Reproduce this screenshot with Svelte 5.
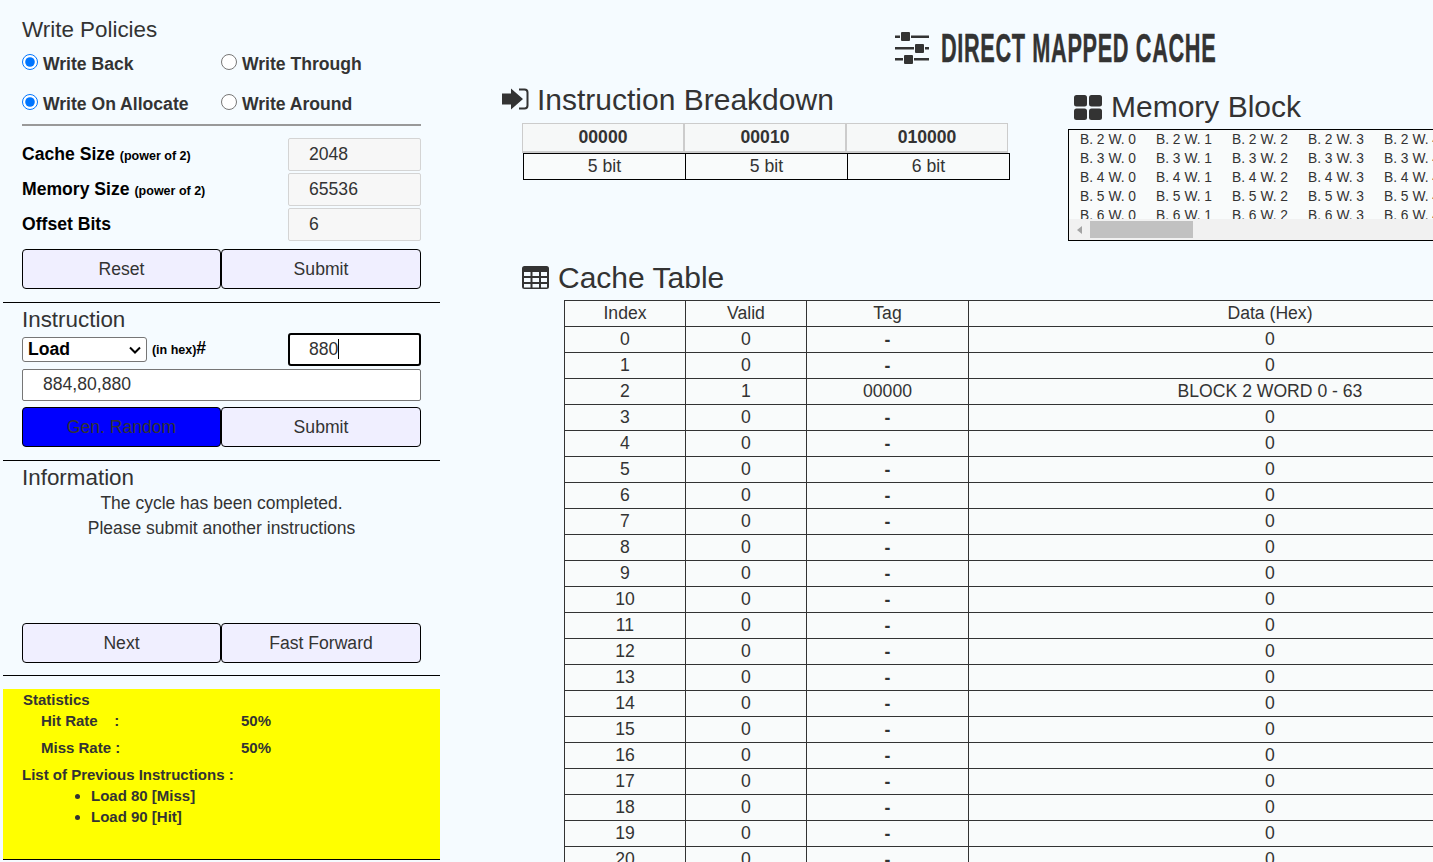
<script>
  const rows = Array.from({ length: 21 }, (_, i) => i);
  const blocks = [2, 3, 4, 5, 6];
  const words = [0, 1, 2, 3, 4, 5];
</script>

<div class="page">
  <aside class="side">
    <section class="sec first">
      <h3>Write Policies</h3>
      <div class="radios">
        <label><input type="radio" name="w" checked /> Write Back</label>
        <label><input type="radio" name="w" /> Write Through</label>
        <label><input type="radio" name="a" checked /> Write On Allocate</label>
        <label><input type="radio" name="a" /> Write Around</label>
      </div>
      <div class="hr"></div>
      <div class="field"><span class="lab">Cache Size <small>(power of 2)</small></span><input class="ro" readonly value="2048" /></div>
      <div class="field"><span class="lab">Memory Size <small>(power of 2)</small></span><input class="ro" readonly value="65536" /></div>
      <div class="field"><span class="lab">Offset Bits</span><input class="ro" readonly value="6" /></div>
      <div class="btns"><button>Reset</button><button>Submit</button></div>
    </section>
    <section class="sec instr">
      <h3>Instruction</h3>
      <div class="field instr-row">
        <span class="lab"><span class="selwrap"><select><option>Load</option></select><svg class="chev" width="12" height="8" viewBox="0 0 12 8"><path d="M1 1.500l5 5 5-5" fill="none" stroke="#000" stroke-width="2" /></svg></span> <small class="hex">(in hex)</small>#</span>
        <div class="focus">880<i class="caret"></i></div>
      </div>
      <input class="addr" value="884,80,880" />
      <div class="btns"><button class="blue">Gen. Random</button><button>Submit</button></div>
    </section>
    <section class="sec info">
      <h3>Information</h3>
      <p>The cycle has been completed.</p>
      <p>Please submit another instructions</p>
      <div class="btns low"><button>Next</button><button>Fast Forward</button></div>
    </section>
    <section class="stats">
      <div class="st">Statistics</div>
      <div class="rate one"><span>Hit Rate &nbsp;&nbsp; :</span><span>50%</span></div>
      <div class="rate two"><span>Miss Rate :</span><span>50%</span></div>
      <div class="prev">List of Previous Instructions :</div>
      <ul>
        <li>Load 80 [Miss]</li>
        <li>Load 90 [Hit]</li>
      </ul>
    </section>
  </aside>

  <main class="main">
    <header class="title">
      <svg class="sliders" width="34" height="32" viewBox="0 0 34 32" fill="#333">
        <path d="M0 3.500h5V6H0zM16 3.500h18V6H16zM0 15h19v2.500H0zM30 15h4v2.500h-4zM0 26h8v2.500H0zM19 26h15v2.500H19z" />
        <rect x="6" y="0" width="9" height="9" rx="1" />
        <rect x="20" y="12" width="9" height="9" rx="1" />
        <rect x="9" y="23" width="9" height="9" rx="1" />
      </svg>
      <h1>DIRECT MAPPED CACHE</h1>
    </header>
    <div class="top">
      <section class="breakdown">
        <h2>
          <svg class="signin" width="27" height="22" viewBox="0 0 27 22" fill="#333">
            <path d="M0 5.500h9V0.500L21 11 9 21.500V16.500H0z" />
            <path d="M17 1.500h5.500q3 0 3 3v13q0 3-3 3H17" fill="none" stroke="#333" stroke-width="2" />
          </svg>
          Instruction Breakdown
        </h2>
        <div class="bits-head"><div>00000</div><div>00010</div><div>010000</div></div>
        <div class="bits"><div>5 bit</div><div>5 bit</div><div>6 bit</div></div>
      </section>
      <section class="memory">
        <h2>
          <svg width="29" height="25" viewBox="0 0 29 25" fill="#333">
            <rect width="13" height="11.500" rx="2.500" /><rect x="15" width="13" height="11.500" rx="2.500" />
            <rect y="13.500" width="13" height="11.500" rx="2.500" /><rect x="15" y="13.500" width="13" height="11.500" rx="2.500" />
          </svg>
          Memory Block
        </h2>
        <div class="membox">
          <div class="memview">
            {#each blocks as b}
              <div class="memrow">
                {#each words as w}<span>B. {b} W. {w}</span>{/each}
              </div>
            {/each}
          </div>
          <div class="scroll"><i class="arrow"></i><i class="thumb"></i></div>
        </div>
      </section>
    </div>
    <section class="cache">
      <h2>
        <svg width="28" height="24" viewBox="0 0 28 24">
          <rect x="0" y="0" width="27" height="23" rx="2.500" fill="#333" />
          <g fill="#f5fbff">
            <rect x="2" y="6" width="6.500" height="4" /><rect x="10.500" y="6" width="6.500" height="4" /><rect x="19" y="6" width="6" height="4" />
            <rect x="2" y="12" width="6.500" height="4" /><rect x="10.500" y="12" width="6.500" height="4" /><rect x="19" y="12" width="6" height="4" />
            <rect x="2" y="18" width="6.500" height="3.500" /><rect x="10.500" y="18" width="6.500" height="3.500" /><rect x="19" y="18" width="6" height="3.500" />
          </g>
        </svg>
        Cache Table
      </h2>
      <table>
        <thead><tr><th>Index</th><th>Valid</th><th>Tag</th><th>Data (Hex)</th></tr></thead>
        <tbody>
          {#each rows as r}
            <tr>
              <td>{r}</td>
              <td>{r === 2 ? 1 : 0}</td>
              <td>{#if r === 2}00000{:else}<b>-</b>{/if}</td>
              <td>{r === 2 ? 'BLOCK 2 WORD 0 - 63' : 0}</td>
            </tr>
          {/each}
        </tbody>
      </table>
    </section>
  </main>
</div>

<style>
  :global(html), :global(body) { margin: 0; height: 862px; overflow: hidden; }
  :global(body) { background: #f5fbff; }
  .page {
    display: grid; grid-template-columns: 437px 1fr; height: 862px; overflow: hidden;
    padding-left: 3px; box-sizing: border-box; color: #333;
    font-family: "Liberation Sans", Arial, sans-serif; font-size: 17.6px;
  }
  .side { display: flex; flex-direction: column; min-width: 0; }
  .sec { padding: 0 19px; border-bottom: 1px solid #000; box-sizing: border-box; }
  h3 { margin: 0; font-weight: 400; font-size: 22.4px; line-height: 28px; }
  .first { height: 303px; padding-top: 16px; }
  .radios { display: grid; grid-template-columns: 199px 1fr; grid-auto-rows: 40px; font-weight: 700; }
  .radios label { display: flex; align-items: center; height: 40px; white-space: pre; }
  .radios input { width: 16px; height: 16px; margin: 0 0 4px; }
  .hr { height: 2px; background: #999; margin-bottom: 12px; }
  .field { display: flex; align-items: center; justify-content: space-between; height: 33px; margin-bottom: 2px; }
  .lab { font-weight: 700; color: #000; white-space: nowrap; }
  small { font-size: 12.5px; }
  input.ro, .focus, .addr {
    box-sizing: border-box; height: 33px; padding: 0 0 0 20px; font: inherit; font-size: 17.6px; color: #333;
  }
  input.ro { width: 133px; background: #f7f7f7; border: 1px solid #d4d4d4; border-radius: 2px; outline: none; }
  .btns { display: grid; grid-template-columns: 199px 200px; height: 40px; margin-top: 7px; }
  .first .btns { margin-top: 8px; }
  button {
    font: inherit; color: #333; background: #f0efff; border: 1px solid #000; border-radius: 4px; padding: 0; height: 40px;
  }
  .blue { background: #0000ff; }
  .instr { height: 158px; padding-top: 3px; }
  .instr-row { margin-top: -1px; }
  .selwrap { position: relative; display: inline-block; vertical-align: middle; width: 125px; height: 25px; }
  select {
    appearance: none; display: block; width: 125px; height: 25px; font: inherit; font-weight: 700; color: #000; background: #fff;
    border: 1px solid #767676; border-radius: 3px; padding: 0 0 2px 5px; box-sizing: border-box;
  }
  .chev { position: absolute; left: 107px; top: 9px; }
  .hex { font-size: 12.5px; }
  .focus { width: 133px; background: #fff; border: 2px solid #000; border-radius: 3px; padding-left: 19px; line-height: 29px; }
  .caret { display: inline-block; width: 1px; height: 20px; background: #000; vertical-align: -4px; }
  .addr { display: block; width: 100%; height: 32px; margin-top: 3px; padding-bottom: 2px; background: #fff; border: 1px solid #767676; border-radius: 2px; outline: none; }
  .instr .btns { margin-top: 6px; }
  .info { height: 215px; padding-top: 3px; }
  .info p { margin: 0; text-align: center; line-height: 25px; font-size: 17.5px; }
  .info p:first-of-type { margin-top: -1px; }
  .low { margin-top: 82px !important; }
  .stats {
    margin-top: 13px; height: 171px; box-sizing: border-box; background: #ff0; border-bottom: 1px solid #000;
    padding: 0 19px; font-size: 15px; font-weight: 700; line-height: 21px;
  }
  .st { padding-left: 1px; }
  .rate { display: grid; grid-template-columns: 200px 1fr; padding-left: 19px; }
  .two { margin-top: 6px; }
  .prev { margin-top: 6px; }
  ul { margin: 0; padding: 0 0 0 69px; }
  .main { min-width: 0; position: relative; }
  .title { display: flex; align-items: center; gap: 12px; height: 66px; padding: 30px 0 0 455px; box-sizing: border-box; }
  .sliders { flex: none; }
  h1 {
    margin: 0; font-family: "Liberation Sans", sans-serif; font-weight: 700; font-size: 41px; letter-spacing: 1.2px;
    line-height: 1; color: #333; white-space: nowrap; transform: scaleX(.53); transform-origin: left center;
    -webkit-text-stroke: .4px #333;
  }
  h2 { margin: 0; font-weight: 400; font-size: 30px; line-height: 34px; display: flex; align-items: center; gap: 8px; white-space: nowrap; }
  h2 svg { flex: none; }
  .top { display: flex; height: 195px; }
  .breakdown { width: 566px; flex: none; padding: 17px 0 0 62px; box-sizing: border-box; }
  .breakdown h2 { height: 34px; }
  .signin { margin-bottom: 2px; }
  .bits-head { display: grid; grid-template-columns: repeat(3, 162px); margin: 6px 0 0 20px; height: 30px; width: 486px; }
  .bits-head div { background: #f6f8f8; border: 1px solid #ccc; border-width: 1px 1px 2px 1px; font-weight: 700; text-align: center; line-height: 27px; box-sizing: border-box; }
  .bits { display: grid; grid-template-columns: 161px 162px 1fr; margin: 0 0 0 21px; border: 1px solid #000; background: #f9fbfb; height: 27px; box-sizing: border-box; width: 487px; }
  .bits div { text-align: center; line-height: 25px; border-left: 1px solid #000; box-sizing: border-box; }
  .bits div:first-child { border-left: 0; }
  .memory { padding-top: 24px; min-width: 0; flex: 1; padding-left: 68px; }
  .memory h2 { height: 34px; }
  .membox { width: 500px; margin: 5px 0 0 -6px; border: 1px solid #000; box-sizing: border-box; height: 112px; background: #f9fbfb; }
  .memview { height: 89px; overflow: hidden; }
  .memrow { display: flex; height: 19px; font-size: 13.8px; line-height: 19px; padding-left: 11px; white-space: nowrap; }
  .memrow span { width: 76px; flex: none; }
  .scroll { display: flex; align-items: center; height: 21px; background: #f1f1f1; }
  .arrow { width: 0; height: 0; margin-left: 8px; border: 4px solid transparent; border-left: 0; border-right: 5px solid #a3a3a3; }
  .thumb { width: 103px; height: 17px; margin-left: 8px; background: #c1c1c1; }
  .cache { padding: 0 0 0 82px; }
  .cache h2 { height: 34px; }
  table { border-collapse: collapse; margin: 5px 0 0 42px; width: 1008px; table-layout: fixed; background: #f9fbfb; }
  th, td {
    box-sizing: border-box; border: 1px solid #333; height: 26px; padding: 0 0 1px; text-align: center;
    font-weight: 400; font-size: 17.6px; line-height: 20px;
  }
  td b { vertical-align: -2px; }
  th:nth-child(1), th:nth-child(2) { width: 121px; }
  th:nth-child(3) { width: 162px; }
</style>
